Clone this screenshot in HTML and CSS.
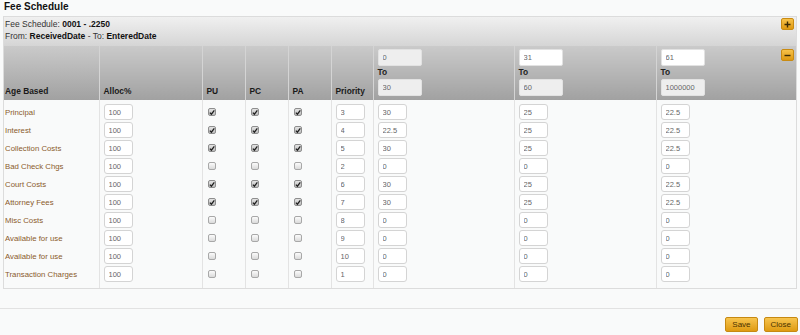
FILE: index.html
```html
<!DOCTYPE html>
<html lang="en">
<head>
  <meta charset="UTF-8" />
  <title>Fee Schedule</title>
  <link rel="stylesheet" href="styles.css">
</head>
<body>

<h1 class="title">Fee Schedule</h1>

<div class="panel">
  <div class="panel-head">
    <div class="head-line">
      <span>Fee Schedule: <b>0001 - .2250</b></span>
      <button class="btn-mini" title="Add">
        <svg width="7" height="7" viewBox="0 0 7 7"><path d="M3.5 0.5v6M0.5 3.5h6" stroke="#3b2a05" stroke-width="1.4"/></svg>
      </button>
    </div>
    <div class="head-line">
      <span>From: <b>ReceivedDate</b> - To: <b>EnteredDate</b></span>
    </div>
  </div>

  <table class="grid">
    <colgroup>
      <col style="width:95px"><col style="width:103px"><col style="width:43px"><col style="width:43px">
      <col style="width:43px"><col style="width:42px"><col style="width:141px"><col style="width:142px"><col style="width:140px">
    </colgroup>
    <thead>
      <tr>
        <th class="first">Age Based</th>
        <th>Alloc%</th>
        <th>PU</th>
        <th>PC</th>
        <th>PA</th>
        <th>Priority</th>
        <th class="range-th">
          <div class="range">
            <input class="range-input ro" value="0" readonly>
            <div class="to">To</div>
            <input class="range-input ro" value="30" readonly>
          </div>
        </th>
        <th class="range-th">
          <div class="range">
            <input class="range-input" value="31">
            <div class="to">To</div>
            <input class="range-input ro" value="60" readonly>
          </div>
        </th>
        <th class="range-th">
          <div class="range-wrap">
            <div class="range">
              <input class="range-input" value="61">
              <div class="to">To</div>
              <input class="range-input ro" value="1000000" readonly>
            </div>
            <button class="btn-mini" title="Remove">
              <svg width="7" height="7" viewBox="0 0 7 7"><path d="M0.5 3.5h6" stroke="#3b2a05" stroke-width="1.4"/></svg>
            </button>
          </div>
        </th>
      </tr>
    </thead>
    <tbody id="fee-rows"></tbody>
  </table>
</div>

<div class="footer">
  <button class="btn">Save</button>
  <button class="btn">Close</button>
</div>

<script>
  const fees = [
    { name: "Principal", alloc: 100, flags: true, priority: 3, tiers: ["30", "25", "22.5"] },
    { name: "Interest", alloc: 100, flags: true, priority: 4, tiers: ["22.5", "25", "22.5"] },
    { name: "Collection Costs", alloc: 100, flags: true, priority: 5, tiers: ["30", "25", "22.5"] },
    { name: "Bad Check Chgs", alloc: 100, flags: false, priority: 2, tiers: ["0", "0", "0"] },
    { name: "Court Costs", alloc: 100, flags: true, priority: 6, tiers: ["30", "25", "22.5"] },
    { name: "Attorney Fees", alloc: 100, flags: true, priority: 7, tiers: ["30", "25", "22.5"] },
    { name: "Misc Costs", alloc: 100, flags: false, priority: 8, tiers: ["0", "0", "0"] },
    { name: "Available for use", alloc: 100, flags: false, priority: 9, tiers: ["0", "0", "0"] },
    { name: "Available for use", alloc: 100, flags: false, priority: 10, tiers: ["0", "0", "0"] },
    { name: "Transaction Charges", alloc: 100, flags: false, priority: 1, tiers: ["0", "0", "0"] },
  ];

  const tick = '<svg width="7" height="7" viewBox="0 0 7 7"><path d="M1 3.6l1.8 1.9L6.2 1" fill="none" stroke="#1e1e1e" stroke-width="1.5"/></svg>';

  function checkbox(on) {
    return `<span class="chk${on ? ' on' : ''}">${on ? tick : ''}</span>`;
  }

  function renderRows() {
    const body = document.getElementById("fee-rows");
    fees.forEach(fee => {
      const tr = document.createElement("tr");
      tr.innerHTML = `
        <td class="first label">${fee.name}</td>
        <td><input class="cell-input" value="${fee.alloc}"></td>
        <td>${checkbox(fee.flags)}</td>
        <td>${checkbox(fee.flags)}</td>
        <td>${checkbox(fee.flags)}</td>
        <td><input class="cell-input" value="${fee.priority}"></td>
        ${fee.tiers.map(t => `<td><input class="cell-input" value="${t}"></td>`).join('')}
      `;
      body.appendChild(tr);
    });
  }

  renderRows();
</script>

</body>
</html>
```

FILE: styles.css
```css
body {
  margin: 0;
  background: #f9fafa;
  font-family: "Liberation Sans", Arial, sans-serif;
  font-size: 8px;
  color: #333;
}
.title {
  margin: 0;
  padding: 0 4px;
  height: 16px;
  font-size: 10px;
  line-height: 14px;
  font-weight: bold;
  color: #111;
}
.panel {
  margin: 0 3px 19px;
  border: 1px solid #dcdcdc;
}
.panel-head {
  background: linear-gradient(#f0f0f0, #d5d5d5);
  padding: 1px 2px 5px 1px;
  font-size: 8.5px;
  color: #333;
}
.panel-head b {
  color: #111;
}
.head-line {
  display: flex;
  align-items: center;
  justify-content: space-between;
  height: 12px;
}
.head-line + .head-line {
  height: 11px;
}
.btn-mini {
  width: 13px;
  height: 12px;
  padding: 0;
  display: flex;
  align-items: center;
  justify-content: center;
  background: linear-gradient(#f7c24a, #de9810);
  border: 1px solid #c98b12;
  border-radius: 2px;
  cursor: pointer;
}
.grid {
  width: 100%;
  border-collapse: collapse;
  table-layout: fixed;
}
.grid thead tr {
  height: 54px;
}
.grid th {
  background: linear-gradient(#cacaca, #a1a1a1);
  border-left: 1px solid #d4d4d4;
  vertical-align: bottom;
  text-align: left;
  padding: 3px 4px 4px;
  font-size: 8.4px;
  font-weight: bold;
  color: #1a1a1a;
}
.grid th.first, .grid td.first {
  border-left: none;
  padding-left: 1px;
}
.grid th.range-th {
  vertical-align: top;
  padding: 3px 2px 3px 4px;
}
.range-wrap {
  display: flex;
  justify-content: space-between;
  align-items: flex-start;
}
.range {
  display: flex;
  flex-direction: column;
  align-items: flex-start;
}
.range-input {
  box-sizing: border-box;
  width: 44px;
  height: 17px;
  padding: 0 4px;
  border: 1px solid #e2e2e2;
  border-radius: 2px;
  background: #fff;
  font: 7.5px "Liberation Sans", Arial, sans-serif;
  color: #666;
  outline: none;
}
.range-input.ro {
  background: #eeeeee;
}
.to {
  height: 13px;
  line-height: 13px;
  font-weight: bold;
  color: #222;
}
.grid td {
  border-left: 1px solid #e3e3e3;
  padding: 1px 4px;
  vertical-align: middle;
}
.grid tbody tr {
  height: 18px;
}
.grid tbody tr:first-child td {
  padding-top: 4px;
}
.grid tbody tr:last-child td {
  padding-bottom: 6px;
}
.label {
  font-size: 7.8px;
  color: #8a5a2c;
  white-space: nowrap;
}
.cell-input {
  display: block;
  box-sizing: border-box;
  width: 29px;
  height: 16px;
  padding: 0 4px;
  border: 1px solid #d4d4d4;
  border-radius: 3px;
  background: #fff;
  font: 7.5px "Liberation Sans", Arial, sans-serif;
  color: #666;
  outline: none;
}
.chk {
  display: flex;
  align-items: center;
  justify-content: center;
  box-sizing: border-box;
  width: 8px;
  height: 8px;
  margin-left: 1px;
  border: 1px solid #a8a8a8;
  border-radius: 2px;
  background: linear-gradient(#fbfbfb, #dadada);
}
.chk.on {
  background: linear-gradient(#e4e4e4, #bdbdbd);
  border-color: #8e8e8e;
}
.footer {
  border-top: 1px solid #e2e2e2;
  padding: 8px 2px 0;
  display: flex;
  justify-content: flex-end;
  gap: 6px;
}
.btn {
  height: 15px;
  padding: 0 6px;
  background: linear-gradient(#f7c44e, #df9b12);
  border: 1px solid #c68912;
  border-radius: 2px;
  font: 8px "Liberation Sans", Arial, sans-serif;
  color: #4a3300;
  cursor: pointer;
}
.btn:hover {
  background: linear-gradient(#f0b43a, #d08c08);
}
```
